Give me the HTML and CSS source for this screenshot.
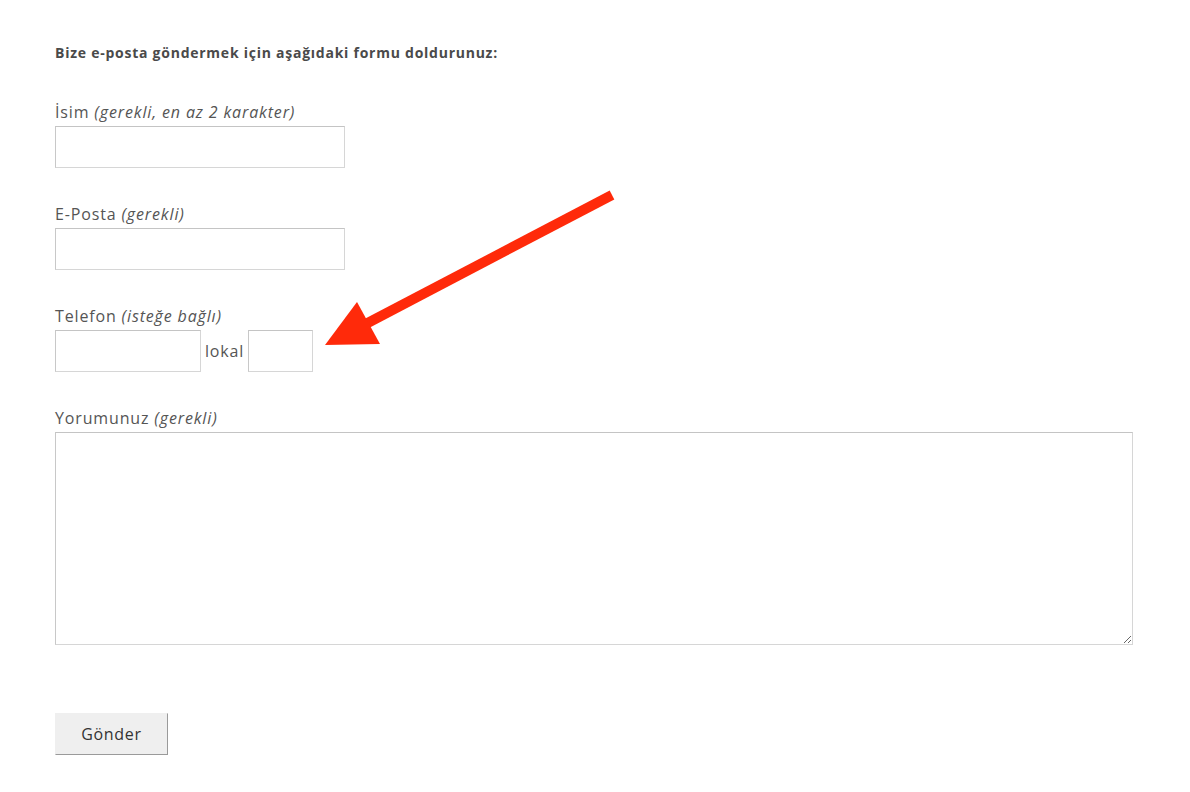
FILE: index.html
```html
<!DOCTYPE html>
<html lang="tr">
<head>
<meta charset="utf-8">
<title>İletişim</title>
<link rel="stylesheet" href="styles.css">
</head>
<body>
<div class="page">
  <p class="intro">Bize e-posta göndermek için aşağıdaki formu doldurunuz:</p>
  <form class="form">
    <div class="group">
      <label class="label">İsim <em>(gerekli, en az 2 karakter)</em></label>
      <input class="input input-wide" type="text">
    </div>
    <div class="group">
      <label class="label">E-Posta <em>(gerekli)</em></label>
      <input class="input input-wide" type="text">
    </div>
    <div class="group">
      <label class="label">Telefon <em>(isteğe bağlı)</em></label>
      <div class="phone-row">
        <input class="input input-phone" type="text">
        <span class="ext-label">lokal</span>
        <input class="input input-ext" type="text">
      </div>
    </div>
    <div class="group">
      <label class="label">Yorumunuz <em>(gerekli)</em></label>
      <textarea class="textarea"></textarea>
    </div>
    <button type="button" class="submit">Gönder</button>
  </form>
  <svg class="arrow" width="320" height="170" viewBox="0 0 320 170">
    <line x1="312" y1="10" x2="60" y2="142" stroke="#ff2a0a" stroke-width="10"/>
    <polygon points="25,160 57,117 80,159" fill="#ff2a0a"/>
  </svg>
</div>
</body>
</html>
```

FILE: styles.css
```css
html, body {
  margin: 0;
  padding: 0;
  background: #ffffff;
}
body {
  font-family: "Open Sans", "Liberation Sans", sans-serif;
  color: #555555;
}
.page {
  position: relative;
  padding: 43px 55px 0 55px;
}
.intro {
  margin: 0 0 37px 0;
  font-size: 14px;
  line-height: 20px;
  font-weight: 700;
  color: #4a4a4a;
  letter-spacing: 0.75px;
}
.form {
  display: flex;
  flex-direction: column;
  align-items: flex-start;
}
.group {
  display: flex;
  flex-direction: column;
  align-items: flex-start;
  margin-bottom: 34px;
}
.group:nth-child(4) {
  align-self: stretch;
  margin-bottom: 68px;
}
.label {
  font-size: 16px;
  line-height: 24px;
  margin-bottom: 2px;
  color: #555555;
  font-weight: 400;
  letter-spacing: 0.85px;
}
.label em {
  font-style: italic;
}
.input {
  box-sizing: border-box;
  height: 42px;
  border: 1px solid #d6d6d6;
  border-top-color: #c4c4c4;
  border-left-color: #c8c8c8;
  background: #ffffff;
  margin: 0;
  padding: 0 8px;
  font-size: 16px;
}
.input-wide { width: 290px; }
.input-phone { width: 146px; }
.input-ext { width: 65px; }
.phone-row {
  display: flex;
  align-items: center;
  gap: 4px;
}
.ext-label {
  font-size: 16px;
  color: #555555;
  letter-spacing: 0.8px;
}
.textarea {
  box-sizing: border-box;
  width: 1078px;
  height: 213px;
  border: 1px solid #d6d6d6;
  border-top-color: #c4c4c4;
  border-left-color: #c8c8c8;
  margin: 0;
  padding: 8px;
  resize: both;
  font-family: inherit;
}
.submit {
  box-sizing: border-box;
  width: 113px;
  height: 42px;
  background: #efefef;
  border: 1px solid #efefef;
  border-right-color: #9a9a9a;
  border-bottom-color: #9a9a9a;
  font-family: inherit;
  font-size: 16px;
  color: #333333;
  letter-spacing: 0.7px;
  padding: 0;
}
.arrow {
  position: absolute;
  left: 300px;
  top: 185px;
}
```
